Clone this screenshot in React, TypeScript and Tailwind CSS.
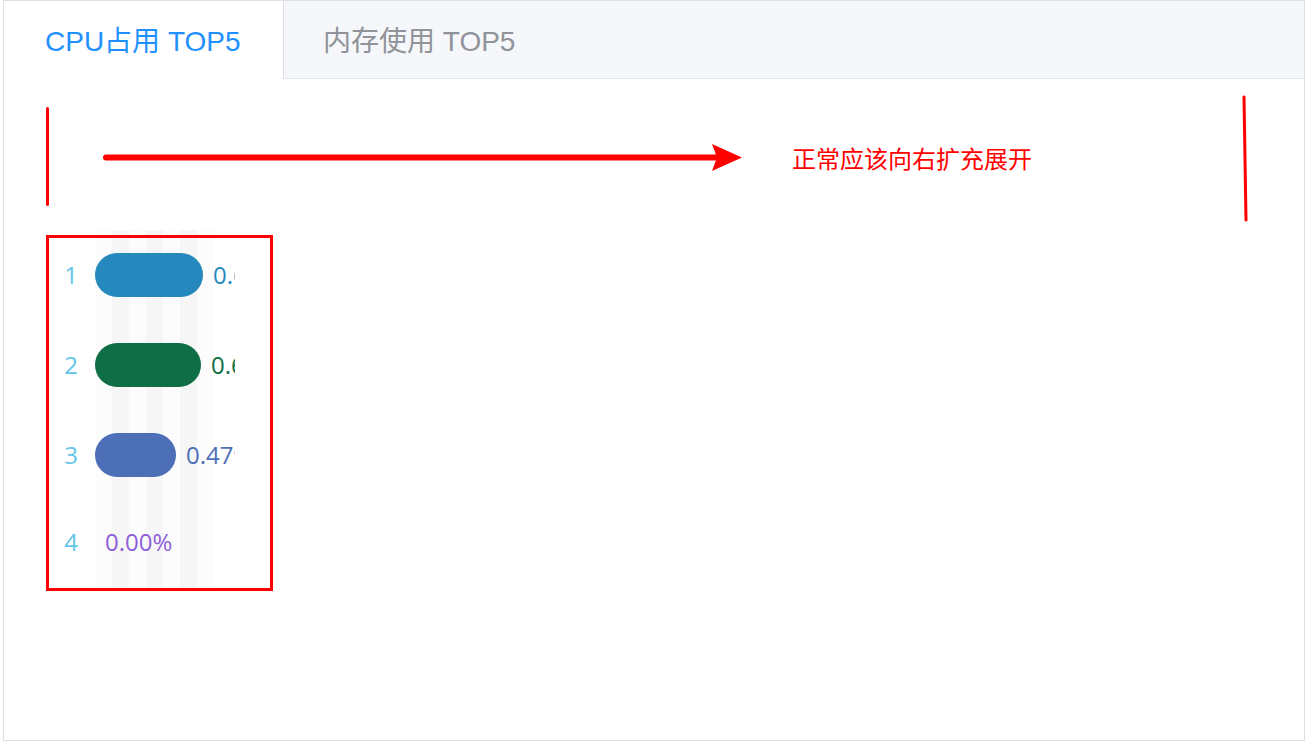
import React from 'react'

const rows = [
    { rank: 1, width: 108, value: '0.63%', bar: 'bg-[#2589bd]', text: 'text-[#2589bd]' },
    { rank: 2, width: 106, value: '0.62%', bar: 'bg-[#106e47]', text: 'text-[#106e47]' },
    { rank: 3, width: 81, value: '0.47%', bar: 'bg-[#4d6fb8]', text: 'text-[#4d6fb8]' },
    { rank: 4, width: 0, value: '0.00%', bar: '', text: 'text-[#8e5fd8]' },
]

// chart split area bands behind the bars
const bands = ['bg-[#fcfcfc]', 'bg-[#f6f6f6]', 'bg-[#fcfcfc]', 'bg-[#f6f6f6]', 'bg-[#fcfcfc]', 'bg-[#f6f6f6]', 'bg-[#fcfcfc]']

const TopChart = () => (
    <div className="relative w-[186px] h-[358px] overflow-hidden font-['Open_Sans',sans-serif] text-[24px]">
        <div className="absolute inset-y-0 left-[46px] flex">
            {bands.map((b, i) => (
                <div key={i} className={`${b} w-[17px] h-full`} />
            ))}
        </div>
        <div className="relative flex flex-col">
            {rows.map((row) => (
                <div key={row.rank} className={`${row.rank === 4 ? 'h-[84px]' : 'h-[90px]'} flex items-center`}>
                    <div className="w-[44px] mr-[2px] shrink-0 text-center text-[#62c6e8] leading-none">{row.rank}</div>
                    {row.width > 0 && (
                        <div className={`${row.bar} h-[44px] rounded-full shrink-0`} style={{ width: row.width }} />
                    )}
                    <div className={`${row.text} ml-[10px] shrink-0 leading-none whitespace-nowrap`}>{row.value}</div>
                </div>
            ))}
        </div>
    </div>
)

export default function App() {
    return (
        <div className="relative w-[1305px] h-[741px] bg-white pl-[3px]">
            <div className="h-full border border-[#dcdfe6] flex flex-col">
                <div className="h-[78px] shrink-0 bg-[#f5f7fa] border-b border-[#e4e7ed] flex font-['Liberation_Sans','Noto_Sans_CJK_SC',sans-serif] text-[28px]">
                    <div className="w-[280px] -mb-px bg-white border-r border-[#dcdfe6] pl-[41px] pt-[4px] flex items-center text-[#1f90ff]">
                        CPU占用 TOP5
                    </div>
                    <div className="pl-[39px] pt-[4px] flex items-center text-[#909399]">
                        内存使用 TOP5
                    </div>
                </div>
                <div className="flex-1 pt-[151px] pl-[45px]">
                    <TopChart />
                </div>
            </div>

            {/* annotations drawn over the screenshot */}
            <div className="absolute left-[46px] top-[107px] w-[3px] h-[99px] bg-[#ff0000] rounded-full" />
            <svg className="absolute left-[100px] top-[140px]" width="650" height="36" viewBox="0 0 650 36">
                <line x1="6" y1="17.5" x2="616" y2="17.5" stroke="#ff0000" strokeWidth="6" strokeLinecap="round" />
                <polygon points="612,4 642,17.5 612,31 617,17.5" fill="#ff0000" />
            </svg>
            <div className="absolute left-[792px] top-[143px] text-[24px] leading-[30px] text-[#ff0000] font-['Noto_Sans_CJK_SC',sans-serif]">
                正常应该向右扩充展开
            </div>
            <svg className="absolute left-[1240px] top-[94px]" width="12" height="130" viewBox="0 0 12 130">
                <line x1="4" y1="3" x2="6" y2="126" stroke="#ff0000" strokeWidth="3" strokeLinecap="round" />
            </svg>
            <div className="absolute left-[46px] top-[235px] w-[227px] h-[356px] border-[3px] border-[#ff0000]" />
        </div>
    )
}
